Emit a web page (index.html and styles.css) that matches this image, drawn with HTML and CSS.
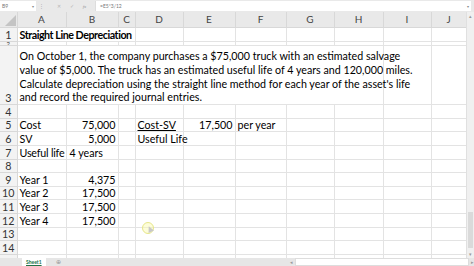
FILE: index.html
```html
<!DOCTYPE html>
<html lang="en">

<head>
    <meta charset="UTF-8">
    <title>Straight Line Depreciation</title>
    <link rel="stylesheet" href="styles.css">
</head>

<body>
    <div class="app">

        <!-- 编辑栏 -->
        <div class="formula-bar">
            <div class="name-box">B9<span class="caret">&#9662;</span></div>
            <span class="dots">&#8942;</span>
            <span class="fb-icon">&#10005;</span>
            <span class="fb-icon">&#10003;</span>
            <span class="fb-icon fx">fx</span>
            <div class="formula">=E5*3/12<span class="caret">&#9662;</span></div>
        </div>

        <!-- 表格 -->
        <div class="main">
            <div class="sheet-wrap">
                <table class="sheet">
                    <colgroup>
                        <col class="c-hdr">
                        <col class="c-a">
                        <col class="c-b">
                        <col class="c-c">
                        <col class="c-d">
                        <col class="c-e">
                        <col class="c-f">
                        <col class="c-g">
                        <col class="c-h">
                        <col class="c-i">
                        <col class="c-j">
                    </colgroup>
                    <tr class="head">
                        <th class="corner"><span class="tri"></span></th>
                        <th>A</th><th>B</th><th>C</th><th>D</th><th>E</th>
                        <th>F</th><th>G</th><th>H</th><th>I</th><th>J</th>
                    </tr>
                    <tr class="r1">
                        <th>1</th>
                        <td colspan="3" class="bold">Straight Line Depreciation</td>
                        <td></td><td></td><td></td><td></td><td></td><td></td><td></td>
                    </tr>
                    <tr class="r2">
                        <th><span class="squash">2</span></th>
                        <td></td><td></td><td></td><td></td><td></td>
                        <td></td><td></td><td></td><td></td><td></td>
                    </tr>
                    <tr class="r3">
                        <th>3</th>
                        <td colspan="8" class="wrap">On October 1, the company purchases a $75,000 truck with an estimated salvage<br>value of $5,000. The truck has an estimated useful life of 4 years and 120,000 miles.<br>Calculate depreciation using the straight line method for each year of the asset's life<br>and record the required journal entries.</td>
                        <td></td><td></td>
                    </tr>
                    <tr class="row">
                        <th>4</th>
                        <td></td><td></td><td></td><td></td><td></td>
                        <td></td><td></td><td></td><td></td><td></td>
                    </tr>
                    <tr class="row">
                        <th>5</th>
                        <td>Cost</td><td class="num">75,000</td><td></td>
                        <td class="under">Cost-SV</td><td class="num">17,500</td><td>per year</td>
                        <td></td><td></td><td></td><td></td>
                    </tr>
                    <tr class="row">
                        <th>6</th>
                        <td>SV</td><td class="num">5,000</td><td></td>
                        <td>Useful Life</td><td></td><td></td>
                        <td></td><td></td><td></td><td></td>
                    </tr>
                    <tr class="row">
                        <th>7</th>
                        <td class="tight">Useful life</td><td class="indent">4 years</td><td></td><td></td><td></td>
                        <td></td><td></td><td></td><td></td><td></td>
                    </tr>
                    <tr class="row">
                        <th>8</th>
                        <td></td><td></td><td></td><td></td><td></td>
                        <td></td><td></td><td></td><td></td><td></td>
                    </tr>
                    <tr class="row">
                        <th>9</th>
                        <td>Year 1</td><td class="num">4,375</td><td></td><td></td><td></td>
                        <td></td><td></td><td></td><td></td><td></td>
                    </tr>
                    <tr class="row">
                        <th>10</th>
                        <td>Year 2</td><td class="num">17,500</td><td></td><td></td><td></td>
                        <td></td><td></td><td></td><td></td><td></td>
                    </tr>
                    <tr class="row">
                        <th>11</th>
                        <td>Year 3</td><td class="num">17,500</td><td></td><td></td><td></td>
                        <td></td><td></td><td></td><td></td><td></td>
                    </tr>
                    <tr class="row">
                        <th>12</th>
                        <td>Year 4</td><td class="num">17,500</td><td></td><td></td><td></td>
                        <td></td><td></td><td></td><td></td><td></td>
                    </tr>
                    <tr class="row">
                        <th>13</th>
                        <td></td><td></td><td></td><td></td><td></td>
                        <td></td><td></td><td></td><td></td><td></td>
                    </tr>
                    <tr class="row">
                        <th>14</th>
                        <td></td><td></td><td></td><td></td><td></td>
                        <td></td><td></td><td></td><td></td><td></td>
                    </tr>
                    <tr class="row">
                        <th>15</th>
                        <td></td><td></td><td></td><td></td><td></td>
                        <td></td><td></td><td></td><td></td><td></td>
                    </tr>
                </table>

                <!-- 鼠标高亮 -->
                <div class="pointer"><span class="arrow"></span></div>
            </div>

            <!-- 竖向滚动条 -->
            <div class="vscroll">
                <span class="arr">&#9652;</span>
                <div class="track"><div class="thumb"></div></div>
                <span class="arr">&#9662;</span>
            </div>
        </div>

        <!-- 工作表标签 -->
        <div class="tabs">
            <span class="nav"></span>
            <span class="tab">Sheet1</span>
            <span class="add">&#8853;</span>
            <div class="hscroll">
                <span class="arr">&#9666;</span>
                <div class="htrack"></div>
                <span class="arr">&#9656;</span>
            </div>
        </div>
    </div>
</body>

</html>
```
FILE: styles.css
```css
body {
    margin: 0;
    background-color: #fff;
    font-family: Lato, "Liberation Sans", sans-serif;
    color: #000;
}

.app {
    display: flex;
    flex-direction: column;
    width: 474px;
    height: 266px;
    overflow: hidden;
}

/* 编辑栏 */
.formula-bar {
    display: flex;
    align-items: center;
    height: 12px;
    padding: 0 3px 0 0;
    background-color: #e9e9e9;
    font-size: 5px;
    color: #777;
    box-sizing: border-box;
}

.name-box {
    display: flex;
    justify-content: space-between;
    align-items: center;
    width: 36px;
    height: 10px;
    padding: 0 2px;
    background-color: #fff;
    box-sizing: border-box;
}

.caret {
    font-size: 4px;
    color: #888;
}

.dots {
    margin: 0 8px 0 3px;
    color: #aaa;
}

.fb-icon {
    width: 13px;
    text-align: center;
    color: #b5b5b5;
}

.fx {
    font-style: italic;
    font-family: "Liberation Serif", serif;
    color: #999;
}

.formula {
    display: flex;
    justify-content: space-between;
    align-items: center;
    flex: 1;
    height: 10px;
    margin-left: 4px;
    padding: 0 2px 0 4px;
    background-color: #fff;
    border-left: 1px solid #ddd;
    box-sizing: border-box;
}

/* 表格 */
.main {
    display: flex;
    height: 246px;
}

.sheet-wrap {
    position: relative;
    flex: 1;
    overflow: hidden;
}

.sheet {
    border-collapse: collapse;
    table-layout: fixed;
    width: 466px;
    font-size: 10.7px;
}

.c-hdr { width: 17px; }
.c-a { width: 49px; }
.c-b { width: 52px; }
.c-c { width: 17px; }
.c-d { width: 48px; }
.c-e { width: 52px; }
.c-f { width: 51px; }
.c-g { width: 48px; }
.c-h { width: 49px; }
.c-i { width: 48px; }
.c-j { width: 35px; }

.sheet td,
.sheet th {
    padding: 0 2px;
    line-height: 12px;
    vertical-align: bottom;
    white-space: nowrap;
    overflow: visible;
    border-right: 1px solid #e3e3e3;
    border-bottom: 1px solid #e3e3e3;
}

.sheet th {
    font-weight: normal;
    color: #333;
    text-align: center;
    background-color: #f3f3f3;
    border-color: #d8d8d8;
    padding: 0;
}

.head th {
    height: 15px;
    line-height: 15px;
    vertical-align: middle;
    background-color: #e9e9e9;
    color: #444;
    font-size: 10px;
}

.corner {
    position: relative;
}

.tri {
    position: absolute;
    right: 1px;
    bottom: 1px;
    width: 0;
    height: 0;
    border-left: 11px solid transparent;
    border-bottom: 11px solid #c4c4c4;
}

.r1 td,
.r1 th {
    height: 13px;
}

.r2 td,
.r2 th {
    height: 2px;
    line-height: 2px;
    overflow: hidden;
}

.squash {
    display: block;
    height: 3px;
    font-size: 6px;
    line-height: 3px;
    overflow: hidden;
}

.r3 td,
.r3 th {
    height: 58px;
}

.r3 td.wrap {
    line-height: 13.7px;
    padding-bottom: 0;
}

.row td,
.row th {
    height: 12.65px;
}

.bold {
    font-weight: bold;
    letter-spacing: -0.45px;
}

.num {
    text-align: right;
}

.under {
    text-decoration: underline;
}

.tight {
    letter-spacing: -0.2px;
}

.sheet td.indent {
    padding-left: 3px;
}

/* 鼠标高亮 */
.pointer {
    position: absolute;
    left: 142px;
    top: 210px;
    width: 10px;
    height: 10px;
    border: 1px solid #e6e68a;
    border-radius: 50%;
    background-color: rgba(250, 250, 170, 0.45);
}

.arrow {
    position: absolute;
    left: 4px;
    top: 3px;
    width: 0;
    height: 0;
    border-left: 3px solid transparent;
    border-right: 3px solid transparent;
    border-bottom: 6px solid #c8c8c8;
    transform: rotate(-25deg);
}

/* 滚动条 */
.vscroll {
    display: flex;
    flex-direction: column;
    align-items: center;
    width: 8px;
    background-color: #f0f0f0;
    border-left: 1px solid #e0e0e0;
    box-sizing: border-box;
    font-size: 5px;
    color: #999;
}

.vscroll .arr {
    height: 8px;
    line-height: 8px;
}

.track {
    position: relative;
    flex: 1;
    width: 100%;
}

.thumb {
    position: absolute;
    left: 1px;
    right: 1px;
    bottom: 2px;
    height: 36px;
    background-color: #dadada;
}

/* 工作表标签 */
.tabs {
    display: flex;
    align-items: stretch;
    height: 8px;
    background-color: #e6e6e6;
    font-size: 5px;
    color: #999;
}

.nav {
    width: 22px;
}

.tab {
    padding: 0 4px;
    background-color: #fff;
    color: #217346;
    font-weight: bold;
    line-height: 8px;
    text-decoration: underline;
}

.add {
    margin-left: 10px;
    line-height: 8px;
    font-size: 6px;
}

.hscroll {
    display: flex;
    align-items: center;
    margin-left: auto;
    width: 184px;
    line-height: 8px;
}

.htrack {
    flex: 1;
    height: 6px;
    margin: 0 2px;
    background-color: #fff;
    border: 1px solid #ddd;
}
```
